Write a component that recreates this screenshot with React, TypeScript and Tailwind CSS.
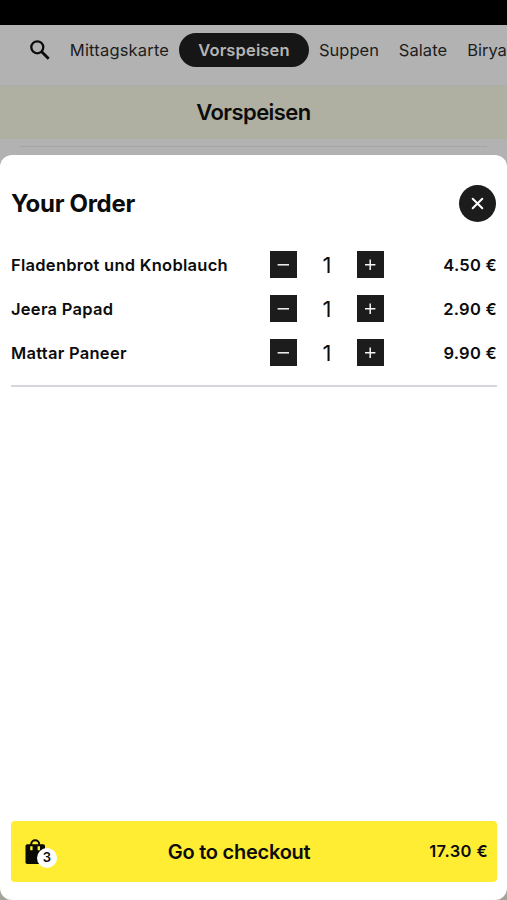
import { useState } from "react";

const categories = [
  { name: "Mittagskarte", className: "ml-[18px] w-[101px] tracking-[0.18px]" },
  { name: "Vorspeisen", className: "ml-[9px] h-[34px] w-[130px] rounded-full bg-[#161616] font-semibold tracking-[0.15px] text-[#b4b4b4]" },
  { name: "Suppen", className: "ml-[9px] w-[62px]" },
  { name: "Salate", className: "ml-[18px] w-[50px] tracking-[0.1px]" },
  { name: "Birya", className: "ml-[19px] w-[40px]" },
];

const initialItems = [
  { name: "Fladenbrot und Knoblauch", price: 4.5, count: 1 },
  { name: "Jeera Papad", price: 2.9, count: 1 },
  { name: "Mattar Paneer", price: 9.9, count: 1 },
];

function formatPrice(value: number) {
  return `${value.toFixed(2)} €`;
}

function BagIcon() {
  return (
    <svg width="21" height="26" viewBox="0 0 21 26" fill="none">
      <path d="M6.2 6.5V5.2a4 4 0 0 1 8 0v1.3" stroke="#0b0b05" strokeWidth="2" />
      <rect x="0.5" y="5.2" width="19.5" height="19.8" rx="1.8" fill="#0b0b05" />
      <path d="M6.4 7.2v4M13.8 7.2v4" stroke="#ffed33" strokeWidth="2.4" />
    </svg>
  );
}

function StepButton({ label, plus, onClick }: { label: string; plus?: boolean; onClick: () => void }) {
  return (
    <button aria-label={label} onClick={onClick} className="mb-px flex size-[27px] items-center justify-center bg-[#1c1c1c]">
      <svg width="13" height="13" viewBox="0 0 13 13" stroke="#f5f5f5" strokeWidth="1.5">
        <path d={plus ? "M1 6.8h10.4M6.2 1.6v10.4" : "M0.6 6.8h11.4"} />
      </svg>
    </button>
  );
}

export default function App() {
  const [items, setItems] = useState(initialItems);

  const changeCount = (name: string, delta: number) => {
    setItems((prev) =>
      prev.map((item) => (item.name === name ? { ...item, count: Math.max(0, item.count + delta) } : item))
    );
  };

  const total = items.reduce((sum, item) => sum + item.price * item.count, 0);
  const count = items.reduce((sum, item) => sum + item.count, 0);

  return (
    <div className="flex h-[900px] w-full flex-col overflow-hidden bg-[#a3a398] font-['Inter',sans-serif] text-[#0c0c0c]">
      <div className="h-[25px] shrink-0 bg-black" />

      <div className="h-[130px] shrink-0 bg-[#b2b2b2]">
        <nav className="flex h-[61px] items-center overflow-hidden border-b border-[#aaaaa9] pb-[10px] pl-[29px] text-[16.5px] text-[#1d1d1d]">
          <svg width="22" height="22" viewBox="0 0 22 22" fill="none" stroke="#0c0c0c" className="shrink-0">
            <circle cx="8.3" cy="8.3" r="6" strokeWidth="2.3" />
            <path d="M12.7 12.7l7 7" strokeWidth="2.8" />
          </svg>
          {categories.map((category) => (
            <button
              key={category.name}
              className={`flex shrink-0 items-center justify-center whitespace-nowrap ${category.className}`}
            >
              {category.name}
            </button>
          ))}
        </nav>
        <h1 className="flex h-[53px] items-center justify-center bg-[#afb0a1] text-[22px] font-semibold tracking-[-0.55px]">
          Vorspeisen
        </h1>
        <div className="mx-5 mt-[7px] h-px bg-[#a5a5a7]" />
      </div>

      {/* shade behind the sheet's corners */}
      <div className="flex min-h-0 flex-1 flex-col bg-linear-to-b from-[#b2b2b2] to-[#a3a398]">
        <section className="flex flex-1 flex-col rounded-[12px] bg-white pr-[10px] pb-[18px] pl-[11px]">
          <header className="mt-[30px] flex h-[38px] items-center justify-between pr-px">
            <h2 className="text-[24px] font-bold tracking-[-0.3px]">Your Order</h2>
            <button aria-label="Close" className="mb-px flex size-[37px] items-center justify-center rounded-full bg-[#1c1c1c]">
              <svg width="13" height="13" viewBox="0 0 13 13" stroke="#ffffff" strokeWidth="2" strokeLinecap="round">
                <path d="M1.7 1.7l9.6 9.6M11.3 1.7l-9.6 9.6" />
              </svg>
            </button>
          </header>

          <ul className="mt-5 border-b-2 border-[#d5d5de] pb-[10px]">
            {items.map((item) => (
              <li key={item.name} className="flex h-11 items-center text-[16.5px] font-semibold">
                <span className="w-[259px] whitespace-nowrap tracking-[0.27px]">{item.name}</span>
                <StepButton label="Remove one" onClick={() => changeCount(item.name, -1)} />
                <span className="w-[60px] text-center text-[22px] font-normal">{item.count}</span>
                <StepButton plus label="Add one" onClick={() => changeCount(item.name, 1)} />
                <span className="ml-auto whitespace-nowrap tracking-[0.27px]">{formatPrice(item.price)}</span>
              </li>
            ))}
          </ul>

          <button className="mt-auto flex h-[61px] items-center rounded-[4px] bg-[#ffed33] pr-[9px] pl-[14px]">
            <span className="relative">
              <BagIcon />
              <span className="absolute top-[9px] left-[12px] flex size-5 items-center justify-center rounded-full bg-white text-[13px] font-semibold">
                {count}
              </span>
            </span>
            <span className="flex-1 pl-[3px] text-center text-[20px] font-semibold tracking-[-0.25px]">
              Go to checkout
            </span>
            <span className="text-[16.5px] font-semibold tracking-[0.4px]">{formatPrice(total)}</span>
          </button>
        </section>
      </div>
    </div>
  );
}
